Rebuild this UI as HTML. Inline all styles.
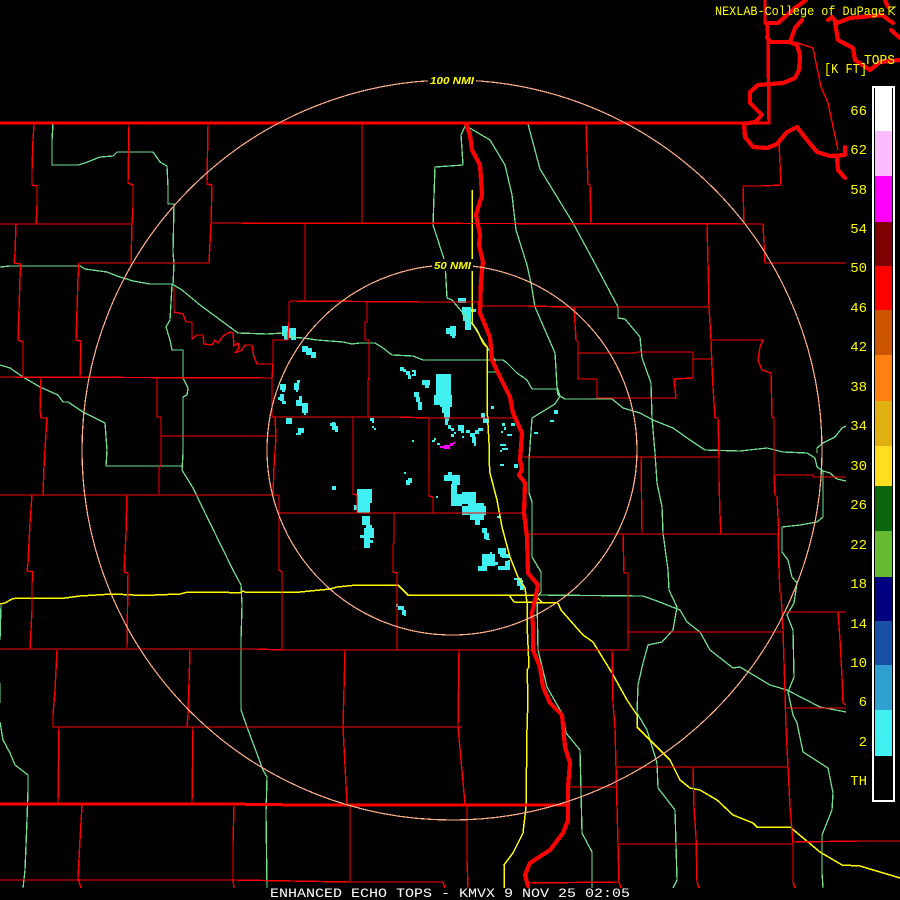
<!DOCTYPE html>
<html>
<head>
<meta charset="utf-8">
<title>Enhanced Echo Tops - KMVX</title>
<style>
html,body{margin:0;padding:0;background:#000;width:900px;height:900px;overflow:hidden}
svg{display:block}
.r{fill:none;stroke:#f00;stroke-width:1.4;shape-rendering:crispEdges}
.t{fill:none;stroke:#f00;stroke-width:4.2;stroke-linejoin:round;stroke-linecap:round;shape-rendering:crispEdges}
.g{fill:none;stroke:#70e090;stroke-width:1.3;shape-rendering:crispEdges}
.y{fill:none;stroke:#ff0;stroke-width:1.5;shape-rendering:crispEdges}
.c{fill:none;stroke:#ffb088;stroke-width:1.2;shape-rendering:crispEdges}
text{font-family:"Liberation Mono",monospace;fill:#ff0;font-size:14px}
.lab{font-family:"Liberation Sans",sans-serif;font-size:10px;font-weight:bold;font-style:italic}
</style>
</head>
<body>
<svg width="900" height="900" viewBox="0 0 900 900" xmlns="http://www.w3.org/2000/svg">
<rect width="900" height="900" fill="#000"/>

<!-- echoes -->
<g fill="#40f0f0" shape-rendering="crispEdges">
<rect x="282" y="326" width="6" height="10"/><rect x="284" y="336" width="4" height="4"/><rect x="289" y="328" width="7" height="10"/><rect x="291" y="338" width="5" height="2"/>
<rect x="302" y="346" width="6" height="6"/><rect x="306" y="348" width="6" height="7"/><rect x="311" y="352" width="5" height="6"/>
<rect x="294" y="383" width="5" height="7"/><rect x="297" y="380" width="3" height="3"/><rect x="296" y="390" width="2" height="2"/>
<rect x="280" y="384" width="6" height="6"/><rect x="282" y="390" width="3" height="2"/>
<rect x="280" y="394" width="4" height="7"/><rect x="278" y="397" width="2" height="3"/><rect x="282" y="401" width="4" height="3"/>
<rect x="296" y="400" width="6" height="6"/><rect x="299" y="396" width="3" height="4"/><rect x="302" y="403" width="6" height="10"/><rect x="304" y="413" width="2" height="2"/>
<rect x="286" y="418" width="6" height="6"/>
<rect x="298" y="428" width="6" height="5"/><rect x="296" y="433" width="5" height="2"/>
<rect x="330" y="423" width="6" height="3"/><rect x="332" y="422" width="3" height="8"/><rect x="334" y="426" width="4" height="4"/><rect x="335" y="430" width="3" height="2"/>
<rect x="370" y="418" width="4" height="3"/><rect x="372" y="421" width="2" height="2"/><rect x="372" y="426" width="2" height="2"/><rect x="374" y="428" width="2" height="2"/>
<rect x="412" y="440" width="2" height="2"/>
<rect x="400" y="367" width="4" height="4"/><rect x="403" y="369" width="3" height="3"/><rect x="406" y="371" width="4" height="4"/><rect x="408" y="375" width="3" height="4"/>
<rect x="412" y="370" width="4" height="2"/><rect x="414" y="372" width="2" height="4"/><rect x="412" y="374" width="2" height="2"/>
<rect x="458" y="298" width="8" height="5"/>
<rect x="462" y="307" width="9" height="8"/><rect x="463" y="315" width="8" height="6"/><rect x="465" y="321" width="6" height="9"/><rect x="471" y="309" width="5" height="3"/>
<rect x="446" y="328" width="10" height="6"/><rect x="450" y="326" width="6" height="10"/><rect x="452" y="336" width="3" height="2"/>
<rect x="422" y="380" width="8" height="5"/><rect x="425" y="385" width="4" height="3"/>
<rect x="414" y="392" width="5" height="5"/><rect x="416" y="397" width="4" height="5"/><rect x="418" y="402" width="4" height="8"/>
<rect x="436" y="374" width="15" height="23"/><rect x="434" y="395" width="9" height="10"/><rect x="440" y="395" width="12" height="12"/><rect x="442" y="407" width="8" height="6"/><rect x="444" y="413" width="6" height="5"/><rect x="445" y="418" width="4" height="3"/>
<rect x="445" y="421" width="3" height="4"/><rect x="448" y="425" width="3" height="4"/><rect x="451" y="428" width="3" height="3"/><rect x="454" y="432" width="2" height="2"/>
<rect x="458" y="425" width="6" height="6"/><rect x="461" y="431" width="3" height="2"/>
<rect x="466" y="430" width="4" height="3"/><rect x="470" y="433" width="5" height="4"/><rect x="475" y="430" width="4" height="4"/><rect x="478" y="428" width="5" height="3"/><rect x="472" y="437" width="4" height="6"/><rect x="474" y="443" width="2" height="3"/>
<rect x="481" y="413" width="4" height="5"/><rect x="483" y="418" width="6" height="5"/><rect x="491" y="406" width="3" height="3"/>
<rect x="432" y="440" width="3" height="2"/><rect x="437" y="443" width="3" height="2"/><rect x="434" y="438" width="2" height="2"/>
<rect x="462" y="436" width="2" height="2"/><rect x="451" y="434" width="3" height="3"/>
<rect x="502" y="423" width="3" height="3"/><rect x="504" y="427" width="2" height="3"/><rect x="501" y="431" width="2" height="2"/><rect x="511" y="423" width="4" height="3"/><rect x="507" y="434" width="5" height="2"/>
<rect x="534" y="432" width="4" height="2"/><rect x="554" y="410" width="4" height="4"/><rect x="550" y="420" width="4" height="2"/>
<rect x="500" y="444" width="6" height="2"/><rect x="502" y="448" width="6" height="2"/><rect x="500" y="450" width="2" height="2"/>
<rect x="332" y="486" width="4" height="4"/>
<rect x="357" y="489" width="15" height="14"/><rect x="357" y="503" width="13" height="10"/><rect x="354" y="505" width="3" height="5"/>
<rect x="362" y="516" width="8" height="9"/><rect x="366" y="525" width="6" height="4"/><rect x="364" y="528" width="10" height="10"/><rect x="360" y="535" width="14" height="3"/><rect x="364" y="538" width="6" height="10"/><rect x="370" y="540" width="3" height="3"/>
<rect x="404" y="472" width="2" height="2"/><rect x="406" y="480" width="6" height="3"/><rect x="408" y="478" width="4" height="5"/><rect x="406" y="483" width="4" height="2"/>
<rect x="436" y="496" width="2" height="2"/>
<rect x="448" y="472" width="4" height="3"/><rect x="444" y="475" width="16" height="6"/><rect x="452" y="481" width="8" height="4"/><rect x="451" y="484" width="6" height="14"/><rect x="451" y="498" width="11" height="8"/><rect x="456" y="494" width="6" height="4"/>
<rect x="462" y="492" width="14" height="12"/><rect x="470" y="496" width="6" height="10"/><rect x="468" y="503" width="16" height="8"/><rect x="478" y="508" width="8" height="6"/><rect x="462" y="506" width="24" height="9"/><rect x="470" y="515" width="14" height="5"/><rect x="475" y="520" width="5" height="5"/>
<rect x="482" y="528" width="5" height="5"/><rect x="484" y="533" width="5" height="6"/><rect x="486" y="539" width="4" height="1"/>
<rect x="497" y="516" width="4" height="2"/>
<rect x="482" y="554" width="13" height="12"/><rect x="493" y="562" width="5" height="3"/><rect x="478" y="566" width="9" height="5"/><rect x="490" y="552" width="2" height="3"/>
<rect x="498" y="548" width="8" height="6"/><rect x="500" y="554" width="6" height="3"/><rect x="502" y="557" width="4" height="1"/>
<rect x="498" y="566" width="12" height="4"/><rect x="505" y="561" width="5" height="5"/><rect x="508" y="560" width="2" height="2"/>
<rect x="506" y="554" width="4" height="4"/>
<rect x="514" y="578" width="8" height="2"/><rect x="517" y="580" width="6" height="6"/><rect x="520" y="586" width="4" height="4"/>
<rect x="396" y="604" width="2" height="3"/><rect x="398" y="606" width="6" height="4"/><rect x="402" y="610" width="4" height="5"/><rect x="404" y="615" width="2" height="1"/>
<rect x="500" y="464" width="4" height="2"/><rect x="514" y="464" width="4" height="4"/>
</g>
<g fill="#ff00ff" shape-rendering="crispEdges">
<rect x="440" y="446" width="4" height="2"/><rect x="444" y="445" width="6" height="4"/><rect x="450" y="443" width="3" height="3"/><rect x="453" y="442" width="2" height="2"/>
</g>

<!-- green roads -->
<g class="g">
<polyline points="53,123 52,140 52,165 78,165 85,163 100,157 113,156 117,152 153,152 160,162 167,166 168,187 168,204 174,204 173,253 174,263 173,285 172,285 171,303 170,320 166,327 170,340 172,350 183,350 183,378 188,388 187,395 183,397 183,453 182,470 193,488 210,523 233,570 241,585 242,605 241,640 241,710 247,727 263,770 267,777 266,813 267,888"/>
<polyline points="0,267 10,266 80,266 85,269 107,272 117,276 133,281 150,284 172,284 182,290 200,305 223,322 238,333 267,334 283,333 287,337 303,338 317,340 343,342 352,344 360,343 375,343 383,348 392,355 413,356 423,360 503,360 507,363 517,373 527,380 532,389 557,389 558,395 565,399 612,399 623,408 640,413 653,420 673,428 690,440 705,450 740,451 767,448 783,452 807,453 815,458 817,467 823,471 830,473 837,479 846,481"/>
<polyline points="817,453 817,448 823,443 835,437 842,428 846,426"/>
<polyline points="823,471 823,517 817,522 800,525 782,527 782,552 788,560 792,577 797,583 794,603 787,615 793,630 794,677 788,692 793,715 797,723 803,752 828,768 833,793 832,810 822,835 822,873 823,888"/>
<polyline points="528,124 540,169 573,223 593,260 618,307 618,318 625,319 640,337 642,358 651,383 652,418 655,453 657,483 662,507 663,533 668,570 669,590 677,607 673,630 662,642 648,645 643,663 638,685 637,713 647,730 657,763 658,788 675,810 677,880 673,888"/>
<polyline points="537,595 643,596 657,601 680,610 687,622 700,632 710,650 733,668 740,667 770,685 787,690 820,707 846,712"/>
<polyline points="466,124 461,135 463,165 435,167 433,225 445,262 446,280 447,298 452,300 473,325 487,347 495,360 495,372 487,372 487,360"/>
<polyline points="468,127 490,140 505,165 512,195 516,230 527,265 531,283 535,307 555,353 557,387 560,396 555,404 532,418 529,460 529,493 532,502 532,557 541,572 541,592 537,597 538,650 547,687 563,715 566,733 580,750 582,833 592,852 592,888"/>
<polyline points="0,365 10,368 23,377 40,387 58,395 63,402 68,402 83,412 105,423 107,450 106,466 182,466"/>
<polyline points="1,605 0,640"/>
<polyline points="0,683 0,703"/>
<polyline points="0,722 3,740 10,753 15,765 28,775 28,790 27,820 25,870 23,888"/>
</g>

<!-- yellow roads -->
<g class="y">
<polyline points="0,604 5,603 12,599 17,598 65,598 80,596 113,594 133,595 155,595 180,594 188,592 218,592 240,593 243,591 245,592 300,592 330,589 337,587 357,585 398,585 408,595 534,595 542,602"/>
<polyline points="509,595 514,602 558,603 561,610 583,635 593,642 612,673 627,700 637,715 637,727 653,743 670,760 680,780 690,788 700,790 717,800 733,815 753,823 757,827 790,827 820,852 842,865 860,866 900,878"/>
<polyline points="472,190 472,323 477,330 483,343 487,347 487,372 487,407 489,443 489,460 490,473 497,500 502,527 510,557 518,577 525,588 527,603 527,623 529,667 527,670 528,697 527,730 526,807 523,833 513,853 504,865 504,888"/>
</g>

<!-- county lines -->
<g class="r">
<polyline points="34,125 33,140 32,170 32,185 37,186 37,205 36,224"/>
<polyline points="0,224 132,224"/>
<polyline points="129,125 128,183 133,185 133,207 132,224 131,262"/>
<polyline points="208,125 207,184 212,185 211,223 209,263"/>
<polyline points="211,223 763,224 765,263 846,263"/>
<polyline points="744,223 743,186 762,186 781,185 779,143"/>
<polyline points="586,124 587,153 588,184 590,185 591,223"/>
<polyline points="362,124 362,224"/>
<polyline points="305,224 305,301"/>
<polyline points="16,224 15,253 14,263 21,264 20,277 19,310 18,340 23,342 23,377"/>
<polyline points="79,263 209,263"/>
<polyline points="79,263 78,277 77,310 76,340 81,341 80,377"/>
<polyline points="0,377 272,378"/>
<polyline points="289,301 289,322 288,340 273,340 273,364 272,378 272,417 275,417 276,437 274,467 273,495"/>
<polyline points="41,378 40,410 41,418 47,418 46,433 44,467 43,495"/>
<polyline points="157,378 157,417 161,417 161,465 159,467 159,494"/>
<polyline points="161,436 276,436"/>
<polyline points="0,495 279,495 279,570 282,572 282,650"/>
<polyline points="279,513 525,513"/>
<polyline points="32,495 30,523 28,563 27,571 33,572 32,583 32,610 30,649"/>
<polyline points="127,495 126,533 124,572 128,573 127,648"/>
<polyline points="0,649 256,649 282,650 628,650 628,573 624,573 623,534"/>
<polyline points="527,534 778,534"/>
<polyline points="57,650 55,690 53,715 53,727 462,727"/>
<polyline points="59,727 58,803"/>
<polyline points="190,650 188,715 187,727"/>
<polyline points="193,727 192,803"/>
<polyline points="345,650 343,727 347,804"/>
<polyline points="459,650 458,727 465,804"/>
<polyline points="82,805 80,840 78,878 81,888"/>
<polyline points="234,806 233,843 233,880 234,888"/>
<polyline points="0,880 235,880 350,882 443,882 445,888"/>
<polyline points="350,805 350,882"/>
<polyline points="467,805 467,860 468,888"/>
<polyline points="527,883 619,882"/>
<polyline points="612,650 613,703 615,728 616,767 617,807 618,843 619,882 621,888"/>
<polyline points="616,767 788,767"/>
<polyline points="568,787 617,787"/>
<polyline points="618,844 793,844"/>
<polyline points="693,767 694,807 696,837 697,882 699,888"/>
<polyline points="778,534 779,570 780,593 781,593 783,630 785,693 786,727 788,767 790,807 793,843 793,882 795,888"/>
<polyline points="782,612 846,612"/>
<polyline points="838,612 840,640 842,677 843,703 846,705"/>
<polyline points="786,708 846,708"/>
<polyline points="793,842 860,841 900,841"/>
<polyline points="627,632 783,632"/>
<polyline points="707,224 708,263 709,307 711,340 712,367 713,387 715,418 718,418 719,457 719,480 720,515 721,534"/>
<polyline points="290,301 425,302 478,302"/>
<polyline points="480,306 527,306 570,307 709,307"/>
<polyline points="574,307 576,340 578,342 578,379 597,379 597,398 676,398 674,379 693,378 693,352 637,352 636,353 578,353"/>
<polyline points="693,359 712,359"/>
<polyline points="712,340 763,340 760,347 758,360 762,370 771,373 772,417 774,418 774,475 775,495 777,497 779,537"/>
<polyline points="775,475 813,475 813,477 846,477"/>
<polyline points="524,457 719,457"/>
<polyline points="641,457 642,533"/>
<polyline points="367,302 367,322 365,322 365,340 369,340 369,378 368,380 368,417"/>
<polyline points="273,417 399,417 429,418 515,418"/>
<polyline points="353,417 353,494 357,495 357,513"/>
<polyline points="429,418 429,496 433,497 433,513"/>
<polyline points="394,513 394,543 393,544 393,572 397,573 397,650"/>
<polyline points="174,287 174,312 183,314 186,322 192,322 192,339 197,335 203,335 204,344 212,345 215,340 218,343 223,336 230,332 233,333 234,346 238,343 239,348 235,353 242,350 245,345 252,345 254,357 257,364 273,364"/>
<polyline points="795,42 813,48 821,87 828,103 838,150"/>
</g>

<!-- thick state lines and river -->
<g class="t">
<polyline points="0,123 769,123 768,40 767,24 765,23 765,0" style="stroke-width:3.4"/>
<polyline points="0,804 227,804 300,805 568,805" style="stroke-width:3"/>
<polyline points="466,124 470,135 472,150 480,165 482,195 476,215 480,235 479,245 483,262 481,280 480,313 490,337 492,360 500,377 510,397 513,413 522,433 520,460 522,470 519,475 525,483 524,513 527,537 528,573 538,585 535,600 532,613 533,627 533,650 540,667 543,687 550,703 562,715 565,747 570,763 568,787 568,820 563,833 550,850 530,863 525,875 528,886"/>
<polyline points="806,0 795,8 778,23 766,23"/>
<polyline points="802,20 795,28 790,42 770,42 767,37"/>
<polyline points="790,42 797,45 800,55 799,70 795,78 783,83 758,85 750,92 750,103 762,115 755,122 744,124 745,137 753,147 767,148 777,144 787,132 797,127 807,140 817,152 830,156 845,155 845,147"/>
<polyline points="837,157 838,170 845,178"/>
<polyline points="828,20 832,17 837,23 850,18 882,15 893,23"/>
<polyline points="891,30 900,38"/>
<polyline points="835,23 838,40 853,48 855,60 870,70 880,62 900,60"/>
<polyline points="885,0 888,7"/>
</g>

<!-- range rings -->
<g class="c">
<circle cx="452" cy="450" r="370"/>
<circle cx="452" cy="450" r="185"/>
</g>
<rect x="428" y="74" width="48" height="12" fill="#000"/>
<rect x="432" y="259" width="41" height="12" fill="#000"/>
<text class="lab" x="430" y="84" textLength="44" lengthAdjust="spacingAndGlyphs">100 NMI</text>
<text class="lab" x="434" y="269" textLength="37" lengthAdjust="spacingAndGlyphs">50 NMI</text>

<!-- colour bar -->
<g shape-rendering="crispEdges">
<rect x="873" y="87" width="21" height="714" fill="#000" stroke="#fff" stroke-width="2"/>
<rect x="875" y="88" width="17" height="43" fill="#fff"/>
<rect x="875" y="131" width="17" height="45" fill="#ffbbff"/>
<rect x="875" y="176" width="17" height="46" fill="#ff00ff"/>
<rect x="875" y="222" width="17" height="44" fill="#7f0000"/>
<rect x="875" y="266" width="17" height="44" fill="#ff0000"/>
<rect x="875" y="310" width="17" height="45" fill="#cc5500"/>
<rect x="875" y="355" width="17" height="46" fill="#ff8010"/>
<rect x="875" y="401" width="17" height="45" fill="#e0b010"/>
<rect x="875" y="446" width="17" height="40" fill="#ffdd20"/>
<rect x="875" y="486" width="17" height="45" fill="#0c660c"/>
<rect x="875" y="531" width="17" height="46" fill="#66bb33"/>
<rect x="875" y="577" width="17" height="44" fill="#000080"/>
<rect x="875" y="621" width="17" height="44" fill="#1850a8"/>
<rect x="875" y="665" width="17" height="45" fill="#30a0d0"/>
<rect x="875" y="710" width="17" height="46" fill="#40f0f0"/>
</g>

<g text-anchor="end">
<text x="867" y="115">66</text><text x="867" y="154">62</text><text x="867" y="194">58</text><text x="867" y="233">54</text>
<text x="867" y="272">50</text><text x="867" y="312">46</text><text x="867" y="351">42</text><text x="867" y="391">38</text>
<text x="867" y="430">34</text><text x="867" y="470">30</text><text x="867" y="509">26</text><text x="867" y="549">22</text>
<text x="867" y="588">18</text><text x="867" y="628">14</text><text x="867" y="667">10</text><text x="867" y="706">6</text>
<text x="867" y="746">2</text><text x="867" y="785">TH</text>
</g>

<text x="715" y="15" style="font-size:13px" textLength="170" lengthAdjust="spacingAndGlyphs">NEXLAB-College of DuPage</text>
<polyline points="889,15 889,7 895,7 890,11 895,15" fill="none" stroke="#ff0" stroke-width="1"/>
<text x="864" y="64" textLength="31" lengthAdjust="spacingAndGlyphs">TOPS</text>
<text x="824" y="73" textLength="43" lengthAdjust="spacingAndGlyphs">[K FT]</text>
<text x="270" y="897" style="fill:#fff;font-size:13px" textLength="360" lengthAdjust="spacingAndGlyphs">ENHANCED ECHO TOPS - KMVX 9 NOV 25 02:05</text>
</svg>
</body>
</html>
